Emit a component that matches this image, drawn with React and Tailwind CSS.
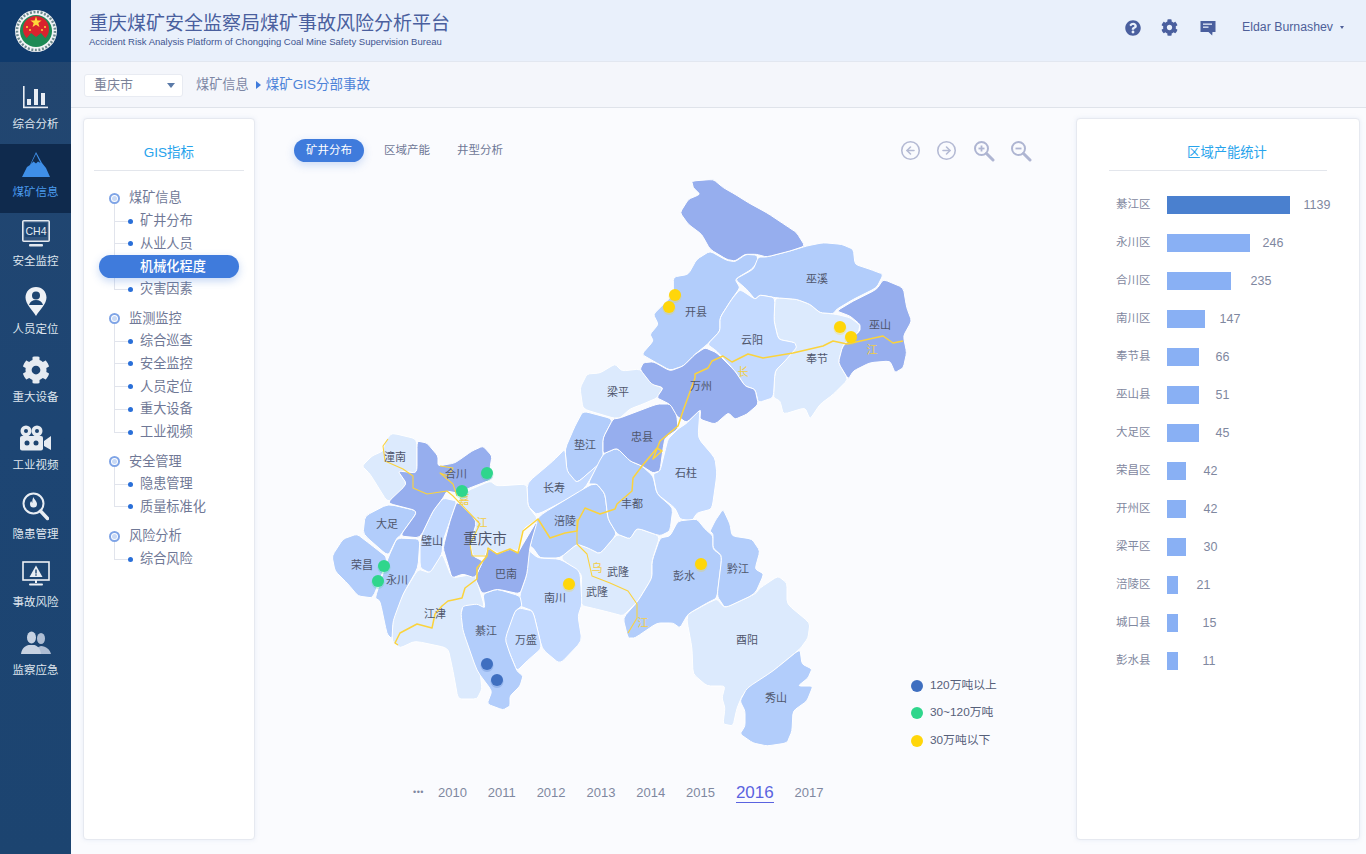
import React from 'react';
import { CircleArrowLeft, CircleArrowRight } from 'lucide-react';
import { FaCog, FaQuestionCircle } from 'react-icons/fa';

const DARK = '#96aeee';
const MID = '#b2cdfb';
const SOFT = '#c4daff';
const PALE = '#dceafd';

// zoomed tracing: origin 620,170 at 3x
const z = (s) =>
  s.split(' ').map((p) => {
    const [x, y] = p.split(',').map(Number);
    return `${620 + x / 3},${170 + y / 3}`;
  }).join(' ');

// rounds the corners a little so the outlines read less like straight cuts
const smooth = (s) => {
  const p = s.split(' ').map((q) => q.split(',').map(Number));
  const n = p.length;
  const lerp = (a, b, t) => [a[0] + (b[0] - a[0]) * t, a[1] + (b[1] - a[1]) * t];
  let d = '';
  for (let i = 0; i < n; i++) {
    const prev = p[(i + n - 1) % n];
    const cur = p[i];
    const next = p[(i + 1) % n];
    const a = lerp(cur, prev, 0.2);
    const b = lerp(cur, next, 0.2);
    d += `${i === 0 ? 'M' : 'L'}${a[0].toFixed(1)} ${a[1].toFixed(1)}Q${cur[0].toFixed(1)} ${cur[1].toFixed(1)} ${b[0].toFixed(1)} ${b[1].toFixed(1)}`;
  }
  return d + 'Z';
};

const regions = [
  [PALE, '580,387 587,373 600,372 615,363 622,370 640,368 652,383 663,387 657,397 643,403 630,408 620,417 613,417 583,408'],
  [PALE, z('465,380 530,385 570,400 600,425 650,430 690,440 720,462 715,485 670,520 655,575 685,625 640,670 600,700 570,745 555,710 490,730 480,690 460,680 465,600 495,570 525,530 525,515 475,505 462,450')],
  [PALE, '577,543 588,547 600,553 617,533 630,538 637,527 660,535 652,560 652,577 638,600 623,615 612,612 596,608 583,605 580,600 582,573 560,557'],
  [PALE, '778,575 787,582 787,603 810,622 808,637 800,648 773,670 743,693 737,707 733,725 723,723 725,707 722,697 725,685 707,685 693,673 692,647 687,620 688,613 708,602 717,598 725,607 755,593 760,587'],
  [PALE, '467,490 490,480 497,485 527,483 528,505 538,518 523,528 518,550 510,548 500,553 488,547 485,555 473,555 470,543 477,520 457,500'],
  [PALE, '442,552 452,577 475,573 485,607 463,605 461,613 467,630 480,670 482,688 477,698 458,698 453,670 448,647 415,640 400,647 392,640 393,617 403,593 418,568 430,572'],
  [PALE, '392,432 417,438 417,472 398,470 407,483 388,502 370,473 362,465 372,455 383,450 385,440'],
  [MID, z('270,240 320,268 345,272 378,250 410,252 415,270 395,295 345,325 360,350 335,385 300,440 300,480 262,520 225,550 190,585 150,598 100,570 65,550 100,510 90,490 115,460 100,430 135,395 160,370 160,318 205,310 230,265')],
  [MID, z('415,258 440,258 510,240 560,225 610,215 665,220 700,235 705,280 750,295 790,310 770,350 700,385 650,415 640,428 600,425 570,400 530,385 465,380 420,372 405,385 380,355 345,325 400,295')],
  [SOFT, z('360,355 405,385 420,372 465,380 462,450 475,505 525,515 530,530 495,570 465,600 460,680 415,695 405,655 375,645 345,600 290,540 262,520 300,480 300,440 335,385')],
  [MID, '583,410 613,418 603,437 603,460 577,482 567,472 565,448 575,425'],
  [SOFT, '565,448 567,470 577,482 600,462 583,490 537,514 528,505 527,482 553,460'],
  [MID, '537,516 590,484 597,483 605,493 608,518 617,533 600,553 588,547 577,543 560,557 540,557 533,547 530,545'],
  [MID, '588,483 603,453 617,447 630,460 642,465 653,475 657,493 673,507 670,530 660,535 637,527 630,538 617,533 608,518 605,493 597,483'],
  [SOFT, '700,408 698,437 715,457 717,473 712,508 697,512 692,520 680,518 675,507 657,493 653,473 660,470 665,450 668,438 678,428 687,422'],
  [MID, '697,518 705,528 713,535 713,548 722,555 717,597 707,602 688,613 680,627 673,622 657,622 635,637 628,637 623,617 638,600 652,577 652,560 660,537 670,535 678,520'],
  [MID, '723,508 730,523 732,535 752,538 760,550 755,568 764,573 755,593 725,607 717,595 722,555 713,547 713,533 710,530 715,520'],
  [MID, '800,648 802,663 812,668 808,677 798,685 813,685 807,700 793,710 792,730 787,742 767,745 753,742 740,733 745,725 745,710 740,700 747,687 773,670'],
  [SOFT, '527,548 538,557 560,558 580,570 582,603 578,615 582,640 560,663 542,648 533,610 520,605 520,593 527,573'],
  [SOFT, '520,607 533,610 542,647 527,660 517,670 510,653 503,638 515,610'],
  [MID, '463,605 477,603 485,607 483,593 497,588 520,595 522,605 515,610 505,638 510,653 517,670 523,675 520,685 510,695 510,705 503,709 487,703 492,690 477,670 463,630 461,613'],
  [SOFT, '457,500 443,497 433,510 420,537 420,567 430,572 442,553 443,540 450,520'],
  [MID, '365,515 388,503 418,510 400,535 397,537 388,555 363,533'],
  [MID, '332,555 343,538 357,533 370,543 388,557 373,597 358,595 348,583 335,570'],
  [MID, '397,537 420,538 418,567 403,593 393,620 392,638 387,633 380,600 375,597 388,557'],
  [DARK, z('215,30 280,25 310,50 345,70 385,95 440,125 500,165 530,185 555,225 510,240 440,258 410,250 375,250 345,270 320,265 270,235 245,190 205,160 180,125 205,85 240,70 220,50')],
  [DARK, z('790,325 850,350 860,410 875,450 850,495 860,545 850,590 825,605 810,570 750,575 700,600 685,625 655,575 668,525 720,480 720,460 690,435 650,420 700,390 770,355')],
  [DARK, z('255,530 290,545 345,600 375,645 405,655 415,700 380,730 345,745 325,725 285,760 240,745 242,715 200,755 170,735 150,700 110,680 130,650 95,640 60,595 70,575 100,572 150,600 190,585 225,550')],
  [DARK, '620,417 657,403 670,403 677,415 678,428 665,437 663,448 660,470 653,472 642,465 630,460 617,447 603,453 603,437 613,418'],
  [DARK, '488,547 497,553 510,548 518,552 523,543 538,518 530,545 527,573 520,593 497,588 482,593 475,577 483,560'],
  [DARK, '457,500 477,520 470,543 473,555 483,560 475,577 463,573 452,577 447,560 443,547 450,520'],
  [DARK, '417,440 427,442 438,455 438,465 455,462 472,450 483,445 492,455 490,467 493,478 467,488 457,492 447,490 443,497 433,510 420,537 400,535 418,510 387,502 407,483 398,470 417,472'],
];

const rivers = [
  '398,644 395,642 400,632 417,623 432,627 435,613 442,605 448,600 453,599 462,597 465,587 477,578 477,567 487,555 488,547 497,553 510,548 518,552 523,530 538,518 550,537 565,532 577,530 578,520 585,507 600,513 615,508 617,503 632,490 633,477 642,465 657,447 662,450 653,458 660,440 678,425 683,410 695,377 695,373 708,367 712,360 723,355 732,361 748,353 763,357 793,352 823,345 833,340 847,343 883,335 893,342 903,340',
  '388,438 383,445 385,460 403,468 413,475 413,487 427,493 447,490 453,495 480,523 470,543 472,555 487,555',
  '440,465 453,467 448,475 440,472 453,483 457,495',
  '577,518 577,543 587,553 592,575 610,582 628,590 637,603 637,617 628,632',
];

const riverNames = [
  ['长', 743, 375], ['江', 872, 353], ['嘉', 464, 503], ['江', 482, 526], ['乌', 597, 571], ['江', 643, 626],
];

const labels = [
  ['巫溪', 817, 278], ['开县', 696, 311], ['云阳', 752, 339], ['巫山', 880, 324], ['奉节', 817, 358], ['梁平', 618, 391],
  ['万州', 701, 385], ['垫江', 585, 444], ['忠县', 642, 436], ['石柱', 686, 472], ['长寿', 554, 487], ['丰都', 632, 503],
  ['涪陵', 565, 520], ['潼南', 395, 456], ['合川', 456, 473], ['大足', 387, 523], ['璧山', 432, 540], ['巴南', 506, 573],
  ['荣昌', 362, 564], ['永川', 397, 579], ['江津', 435, 613], ['綦江', 486, 630], ['万盛', 526, 639], ['南川', 555, 597],
  ['武隆', 618, 571], ['武隆', 597, 591], ['彭水', 684, 575], ['黔江', 738, 568], ['酉阳', 747, 639], ['秀山', 776, 697],
];

const dots = [
  ['#ffd60a', 675, 294], ['#ffd60a', 669, 306], ['#ffd60a', 840, 326], ['#ffd60a', 851, 336], ['#ffd60a', 569, 583], ['#ffd60a', 701, 563],
  ['#2fd68c', 487, 472], ['#2fd68c', 462, 490], ['#2fd68c', 384, 565], ['#2fd68c', 378, 580],
  ['#3f6fc0', 487, 663], ['#3f6fc0', 497, 679],
];

const tree = [
  { title: '煤矿信息', items: ['矿井分布', '从业人员', '机械化程度', '灾害因素'] },
  { title: '监测监控', items: ['综合巡查', '安全监控', '人员定位', '重大设备', '工业视频'] },
  { title: '安全管理', items: ['隐患管理', '质量标准化'] },
  { title: '风险分析', items: ['综合风险'] },
];

const stats = [
  ['綦江区', 1139, 123, 14], ['永川区', 246, 83, 13], ['合川区', 235, 64, 20], ['南川区', 147, 38, 15],
  ['奉节县', 66, 32, 17], ['巫山县', 51, 32, 17], ['大足区', 45, 32, 17], ['荣昌区', 42, 19, 18],
  ['开州区', 42, 19, 18], ['梁平区', 30, 19, 18], ['涪陵区', 21, 11, 19], ['城口县', 15, 11, 25], ['彭水县', 11, 11, 25],
];

function Logo() {
  return (
    <svg width="44" height="44" viewBox="0 0 44 44">
      <circle cx="22" cy="22" r="21" fill="#f2f4f6" />
      <circle cx="22" cy="22" r="19" fill="none" stroke="#6d8a8f" strokeWidth="2.5" strokeDasharray="2 1.6" />
      <circle cx="22" cy="22" r="16" fill="#1d8a55" />
      <circle cx="22" cy="20" r="13" fill="#d8232e" />
      <path d="M22 7.5l1.4 4 4.2.1-3.3 2.5 1.2 4-3.5-2.4-3.5 2.4 1.2-4-3.3-2.5 4.2-.1z" fill="#ffd83a" />
      <circle cx="13" cy="18" r="1" fill="#ffd83a" />
      <circle cx="31" cy="18" r="1" fill="#ffd83a" />
      <circle cx="16" cy="21" r="1" fill="#ffd83a" />
      <circle cx="28" cy="21" r="1" fill="#ffd83a" />
      <path d="M12 30l5-6 5 4 5-4 5 6-5 4h-10z" fill="#1d8a55" />
    </svg>
  );
}

function BarsIcon() {
  return (
    <svg width="26" height="23" viewBox="0 0 26 23" fill="#e8edf4">
      <rect x="0" y="0" width="1.6" height="22" />
      <rect x="0" y="20.6" width="25" height="1.6" />
      <rect x="4" y="13" width="4" height="6" />
      <rect x="11" y="3" width="4" height="16" />
      <rect x="18" y="7" width="4" height="12" />
    </svg>
  );
}

function MountainIcon() {
  return (
    <svg width="28" height="26" viewBox="0 0 28 26">
      <path d="M14 0L20 11 24 16 28 25H0L5 15 8 13z" fill="#3f8fe8" />
      <path d="M14 2L18.5 11 16 9.5 14 11.5 11.5 9.5 9 12z" fill="#0f2a4d" />
    </svg>
  );
}

function MonitorIcon() {
  return (
    <svg width="28" height="27" viewBox="0 0 28 27">
      <rect x="0.8" y="0.8" width="26.4" height="20.4" rx="1" fill="#33557e" stroke="#e3e8ef" strokeWidth="1.6" />
      <rect x="3" y="3" width="22" height="14" fill="#1e4470" />
      <text x="14" y="14.5" textAnchor="middle" fill="#e6ebf2" fontSize="10.5" fontFamily="Liberation Sans">CH4</text>
      <rect x="7" y="24" width="14" height="2.4" rx="1" fill="#e3e8ef" />
    </svg>
  );
}

function PinIcon() {
  return (
    <svg width="22" height="29" viewBox="0 0 22 29">
      <path d="M11 0C5 0 .5 4.6.5 10.6.5 17 7 22.5 11 29c4-6.5 10.5-12 10.5-18.4C21.5 4.6 17 0 11 0z" fill="#eef1f5" />
      <circle cx="11" cy="8.5" r="4" fill="#1d4470" />
      <path d="M4 18c1-3.5 3.5-5 7-5s6 1.5 7 5z" fill="#1d4470" />
    </svg>
  );
}

function VideoIcon() {
  return (
    <svg width="33" height="26" viewBox="0 0 33 26" fill="#e6ebf1">
      <circle cx="7" cy="6" r="5.5" />
      <circle cx="18" cy="6" r="5.5" />
      <circle cx="7" cy="6" r="2" fill="#1d4470" />
      <circle cx="18" cy="6" r="2" fill="#1d4470" />
      <rect x="1" y="11" width="23" height="14.5" rx="2" />
      <circle cx="8" cy="18" r="2.5" fill="#1d4470" />
      <circle cx="17" cy="18" r="2.5" fill="#1d4470" />
      <path d="M25 16l7-5v14l-7-4z" />
    </svg>
  );
}

function FlameSearchIcon() {
  return (
    <svg width="27" height="29" viewBox="0 0 27 29">
      <circle cx="11.5" cy="11.5" r="10" fill="none" stroke="#e8edf3" strokeWidth="2" />
      <path d="M18.5 19l7 7.5" stroke="#e8edf3" strokeWidth="3.5" strokeLinecap="round" />
      <path d="M11.5 5c.5 2.5 3.5 4 3.5 7a3.5 3.5 0 0 1-7 0c0-1.5.7-2.3 1.3-3 .2 1 .6 1.5 1.2 1.7C10 9 10.5 7 11.5 5z" fill="#e8edf3" />
    </svg>
  );
}

function AlertMonitorIcon() {
  return (
    <svg width="28" height="28" viewBox="0 0 28 28">
      <rect x="1" y="1" width="26" height="18" fill="none" stroke="#eef1f5" strokeWidth="1.6" />
      <path d="M14 4.5l6.5 11.5h-13z" fill="#e8edf3" />
      <rect x="13.3" y="8.5" width="1.4" height="4" fill="#1d4470" />
      <rect x="13.3" y="13.3" width="1.4" height="1.4" fill="#1d4470" />
      <path d="M13 19h2v3h-2z" fill="#eef1f5" />
      <rect x="7" y="22.5" width="14" height="2" rx="1" fill="#eef1f5" />
    </svg>
  );
}

function UsersIcon() {
  return (
    <svg width="30" height="24" viewBox="0 0 30 24" fill="#c7d2e2">
      <ellipse cx="20" cy="7.5" rx="4" ry="5.5" fill="#aebdd3" />
      <path d="M14 23c0-4 2-7 6-8 5 .5 9 3.5 10 8z" fill="#aebdd3" />
      <ellipse cx="10.5" cy="6.5" rx="4.5" ry="6" />
      <path d="M0 23c.5-5 3.5-8 7.5-9h6c3.5 1 6 4 6.5 9z" />
    </svg>
  );
}

function ChatIcon() {
  return (
    <svg width="16" height="16" viewBox="0 0 16 16">
      <path d="M.5 1h15v11h-3l-.3 3.5L8.5 12H.5z" fill="#4a5f9e" />
      <rect x="3" y="3.5" width="9" height="1.3" fill="#e9f0fb" />
      <rect x="3" y="6.5" width="5.5" height="1.3" fill="#e9f0fb" />
    </svg>
  );
}

function MagnifyIcon({ plus }) {
  return (
    <svg width="22" height="22" viewBox="0 0 22 22" fill="none" stroke="#aeb5d2">
      <circle cx="8.5" cy="8.5" r="6.5" strokeWidth="2" />
      <path d="M13.5 13.5L20 20" strokeWidth="3" strokeLinecap="round" />
      <path d="M5.5 8.5h6" strokeWidth="1.8" />
      {plus && <path d="M8.5 5.5v6" strokeWidth="1.8" />}
    </svg>
  );
}

const navItems = [
  ['综合分析', <BarsIcon />],
  ['煤矿信息', <MountainIcon />, true],
  ['安全监控', <MonitorIcon />],
  ['人员定位', <PinIcon />],
  ['重大设备', <FaCog size={28} color="#e6ebf1" />],
  ['工业视频', <VideoIcon />],
  ['隐患管理', <FlameSearchIcon />],
  ['事故风险', <AlertMonitorIcon />],
  ['监察应急', <UsersIcon />],
];

function Sidebar() {
  return (
    <div className="w-[71px] shrink-0 h-full flex flex-col bg-gradient-to-b from-[#23466f] via-[#1d4573] to-[#1c4470]">
      <div className="h-[62px] flex items-center justify-center bg-[#0f3a6c]">
        <Logo />
      </div>
      <div className="pt-[14px]">
        {navItems.map(([name, icon, active]) => (
          <div key={name} className={`h-[68.3px] flex flex-col items-center pt-[5px] ${active ? 'bg-[#0f2a4d]' : ''}`}>
            <div className="h-[32px] flex items-center justify-center">{icon}</div>
            <div className={`mt-[3px] text-[11.5px] leading-[16px] ${active ? 'text-[#4b9bee]' : 'text-[#dfe5ee]'}`}>{name}</div>
          </div>
        ))}
      </div>
    </div>
  );
}

function TopBars() {
  return (
    <>
      <div className="h-[62px] shrink-0 flex items-center justify-between bg-[#e9f0fb] border-b border-[#e2e7f0] pl-[18px] pr-[22px]">
        <div>
          <div className="text-[19px] leading-[22px] text-[#4a5f9e] mt-[-2px]">重庆煤矿安全监察局煤矿事故风险分析平台</div>
          <div className="mt-[2px] text-[9.5px] leading-[10px] text-[#3f5590]">Accident Risk Analysis Platform of Chongqing Coal Mine Safety Supervision Bureau</div>
        </div>
        <div className="flex items-center mb-[6px]">
          <FaQuestionCircle size={16} color="#4a5f9e" />
          <FaCog size={17} color="#4a5f9e" className="ml-[20px]" />
          <div className="ml-[22px]"><ChatIcon /></div>
          <span className="ml-[26px] text-[12.3px] text-[#4e5f99]">Eldar Burnashev</span>
          <span className="ml-[7px] w-0 h-0 border-x-[2.5px] border-x-transparent border-t-[3px] border-t-[#4e5f99]"></span>
        </div>
      </div>
      <div className="h-[46px] shrink-0 flex items-center bg-[#f4f6fb] border-b border-[#dfe3ea] pl-[13px] pt-[1px]">
        <div className="w-[99px] h-[23px] flex items-center justify-between bg-white border border-[#e8ebf2] rounded-[3px] pl-[9px] pr-[7px] text-[13px] text-[#7a8299]">
          重庆市
          <span className="w-0 h-0 border-x-[4px] border-x-transparent border-t-[5px] border-t-[#5a7aa8]"></span>
        </div>
        <span className="ml-[13px] text-[13.2px] text-[#7c86a4]">煤矿信息</span>
        <span className="ml-[7px] w-0 h-0 border-y-[4px] border-y-transparent border-l-[5px] border-l-[#3f7bdc]"></span>
        <span className="ml-[5px] mt-[1px] text-[13.5px] text-[#4d83d8]">煤矿GIS分部事故</span>
      </div>
    </>
  );
}

function TreePanel() {
  return (
    <div className="w-[172px] shrink-0 bg-white border border-[#e6e9f0] rounded-[4px] shadow-[0_0_4px_rgba(180,195,225,0.25)]">
      <div className="mt-[24px] mx-[10px] h-[28px] border-b border-[#e3e6ec] text-center text-[13.5px] leading-[20px] text-[#27a3ec]">GIS指标</div>
      <div className="mt-[16px] pl-[25px] flex flex-col gap-[6.8px]">
        {tree.map((group) => (
          <div key={group.title} className="relative">
            <div className="absolute left-[5px] top-[12px] bottom-[11px] w-px bg-[#e1e4ec]"></div>
            <div className="h-[22.7px] flex items-center text-[13.2px] text-[#6f7896]">
              <span className="relative w-[11px] h-[11px] rounded-full border-[2px] border-[#7fa4e6] bg-white flex items-center justify-center mr-[9px]">
                <span className="w-[5px] h-[5px] rounded-full bg-[#c8d9f5]"></span>
              </span>
              {group.title}
            </div>
            {group.items.map((item) =>
              item === '机械化程度' ? (
                <div key={item} className="relative ml-[-10px] w-[140px] h-[22.7px] flex items-center pl-[41px] rounded-full bg-[#3f7bdc] shadow-[0_3px_8px_rgba(63,123,220,0.3)] text-[13.2px] font-medium text-white">{item}</div>
              ) : (
                <div key={item} className="h-[22.7px] flex items-center text-[13.2px] text-[#6f7896]">
                  <span className="ml-[5px] w-[14px] h-px bg-[#e1e4ec]"></span>
                  <span className="w-[5px] h-[5px] rounded-full bg-[#2a6fd8] mr-[7px]"></span>
                  {item}
                </div>
              )
            )}
          </div>
        ))}
      </div>
    </div>
  );
}

function MapView() {
  return (
    <svg width="600" height="590" viewBox="320 170 600 590" className="block">
      {regions.map(([fill, points], i) => (
        <path key={i} d={smooth(points)} fill={fill} stroke="#ffffff" strokeWidth="1" strokeLinejoin="round" />
      ))}
      {rivers.map((d, i) => (
        <polyline key={i} points={d} fill="none" stroke="#fbd33c" strokeWidth={i === 0 ? 1.5 : 1.1} strokeLinejoin="round" />
      ))}
      {riverNames.map(([t, x, y], i) => (
        <text key={i} x={x} y={y} textAnchor="middle" fontSize="11" fill="#f2cd45">{t}</text>
      ))}
      {labels.map(([t, x, y], i) => (
        <text key={i} x={x} y={y + 4} textAnchor="middle" fontSize="11" fill="#4f566c">{t}</text>
      ))}
      <text x="485" y="543" textAnchor="middle" fontSize="14.5" fill="#4f566c">重庆市</text>
      {dots.map(([c, x, y], i) => (
        <g key={i}>
          <circle cx={x} cy={y + 1.5} r="6.5" fill={c} opacity="0.25" />
          <circle cx={x} cy={y} r="6" fill={c} />
        </g>
      ))}
    </svg>
  );
}

function CenterPanel() {
  const years = ['2010', '2011', '2012', '2013', '2014', '2015'];
  return (
    <div className="flex-1 min-w-0 flex flex-col">
      <div className="mt-[21px] h-[23px] flex items-center justify-between pl-[39px] pr-[44px]">
        <div className="flex items-center text-[11.5px] text-[#6f7896]">
          <div className="w-[70px] h-[23px] flex items-center justify-center rounded-full bg-[#3f7bdc] text-white shadow-[0_3px_8px_rgba(63,123,220,0.25)]">矿井分布</div>
          <span className="ml-[20px]">区域产能</span>
          <span className="ml-[27px]">井型分析</span>
        </div>
        <div className="flex items-center gap-[15.4px] text-[#b4bad4]">
          <CircleArrowLeft size={21} strokeWidth={1.8} />
          <CircleArrowRight size={21} strokeWidth={1.8} />
          <MagnifyIcon plus />
          <MagnifyIcon />
        </div>
      </div>
      <div className="relative mt-[9px] ml-[65px] w-[600px]">
        <MapView />
        <div className="absolute left-[591px] top-[508px] w-[100px] flex flex-col gap-[13.3px] text-[11.8px] text-[#56607a]">
          {[['#3f6fc0', '120万吨以上'], ['#2fd68c', '30~120万吨'], ['#ffd60a', '30万吨以下']].map(([c, t]) => (
            <div key={t} className="h-[14px] flex items-center gap-[7px] whitespace-nowrap">
              <span className="w-[12px] h-[12px] rounded-full" style={{ backgroundColor: c }}></span>
              {t}
            </div>
          ))}
        </div>
      </div>
      <div className="mt-[20px] h-[24px] flex items-center pl-[158px] text-[13px] text-[#7f88a0]">
        <span className="text-[9px] mr-[14px] tracking-[0.5px]">•••</span>
        <div className="flex items-center gap-[20.9px]">
          {years.map((y) => <span key={y}>{y}</span>)}
          <span className="text-[17px] leading-[18px] text-[#5a63e0] border-b border-[#5a63e0]">2016</span>
          <span>2017</span>
        </div>
      </div>
    </div>
  );
}

function StatsPanel() {
  return (
    <div className="w-[284px] shrink-0 bg-white border border-[#e6e9f0] rounded-[4px] shadow-[0_0_4px_rgba(180,195,225,0.25)]">
      <div className="mt-[24px] mx-[32px] pl-[18px] h-[28px] border-b border-[#e3e6ec] text-center text-[13.3px] leading-[20px] text-[#27a3ec]">区域产能统计</div>
      <div className="mt-[15px] pl-[39px]">
        {stats.map(([name, value, width, gap]) => (
          <div key={name} className="h-[38px] flex items-center text-[#7f88a0]">
            <span className="w-[50.500px] shrink-0 text-[11.5px]">{name}</span>
            <span className="h-[18px]" style={{ width, backgroundColor: value === 1139 ? '#4a80cf' : '#89b0f4' }}></span>
            <span className="text-[12.5px]" style={{ marginLeft: gap }}>{value}</span>
          </div>
        ))}
      </div>
    </div>
  );
}

export default function App() {
  return (
    <div className="w-full h-screen flex overflow-hidden bg-[#fafbfe] font-['Liberation_Sans','Noto_Sans_CJK_SC',sans-serif]">
      <Sidebar />
      <div className="flex-1 min-w-0 flex flex-col">
        <TopBars />
        <div className="h-[722px] mt-[10px] flex pl-[12px] pr-[6px]">
          <TreePanel />
          <CenterPanel />
          <StatsPanel />
        </div>
      </div>
    </div>
  );
}
